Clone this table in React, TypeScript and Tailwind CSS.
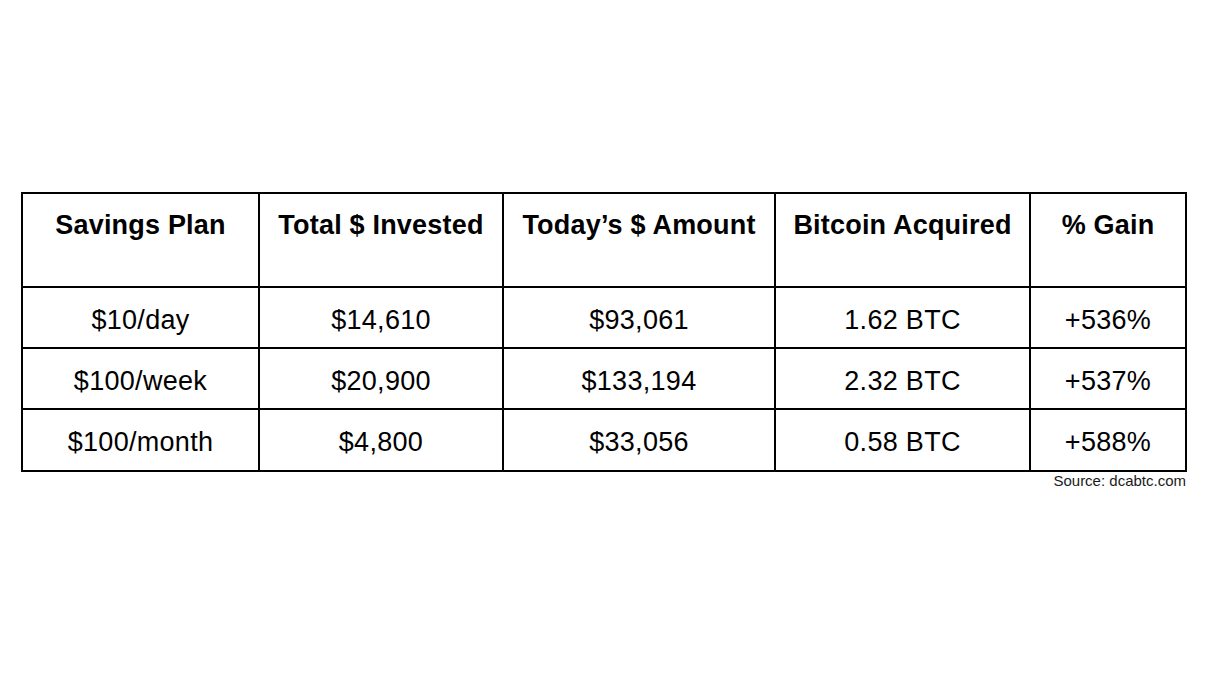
import React from 'react';

const headers = ['Savings Plan', 'Total $ Invested', 'Today’s $ Amount', 'Bitcoin Acquired', '% Gain'];

const rows = [
  ['$10/day', '$14,610', '$93,061', '1.62 BTC', '+536%'],
  ['$100/week', '$20,900', '$133,194', '2.32 BTC', '+537%'],
  ['$100/month', '$4,800', '$33,056', '0.58 BTC', '+588%'],
];

const rowHeights = ['h-[61px]', 'h-[61px]', 'h-[62px]'];

export default function App() {
  return (
    <div className="w-[1210px] h-[681px] bg-white pt-[192px] pl-[21px] font-['Liberation_Sans',Arial,sans-serif] text-black">
      <div className="w-[1166px]">
        <div className="grid grid-cols-[237px_244px_272px_255px_156px] border-l-2 border-t-2 border-black">
          {headers.map((h) => (
            <div
              key={h}
              className="h-[94px] border-r-2 border-b-2 border-black pt-[16px] text-center text-[27px] leading-[31px] tracking-[0.2px] font-bold whitespace-nowrap"
            >
              {h}
            </div>
          ))}
          {rows.map((row, i) =>
            row.map((cell, j) => (
              <div
                key={`${i}-${j}`}
                className={`${rowHeights[i]} border-r-2 border-b-2 border-black pt-[5px] flex items-center justify-center text-[27px] leading-[31px] tracking-[0.3px] whitespace-nowrap`}
              >
                {cell}
              </div>
            ))
          )}
        </div>
        <div className="text-right text-[15px] leading-[17px] text-[#1a1a1a] pr-px">Source: dcabtc.com</div>
      </div>
    </div>
  );
}
